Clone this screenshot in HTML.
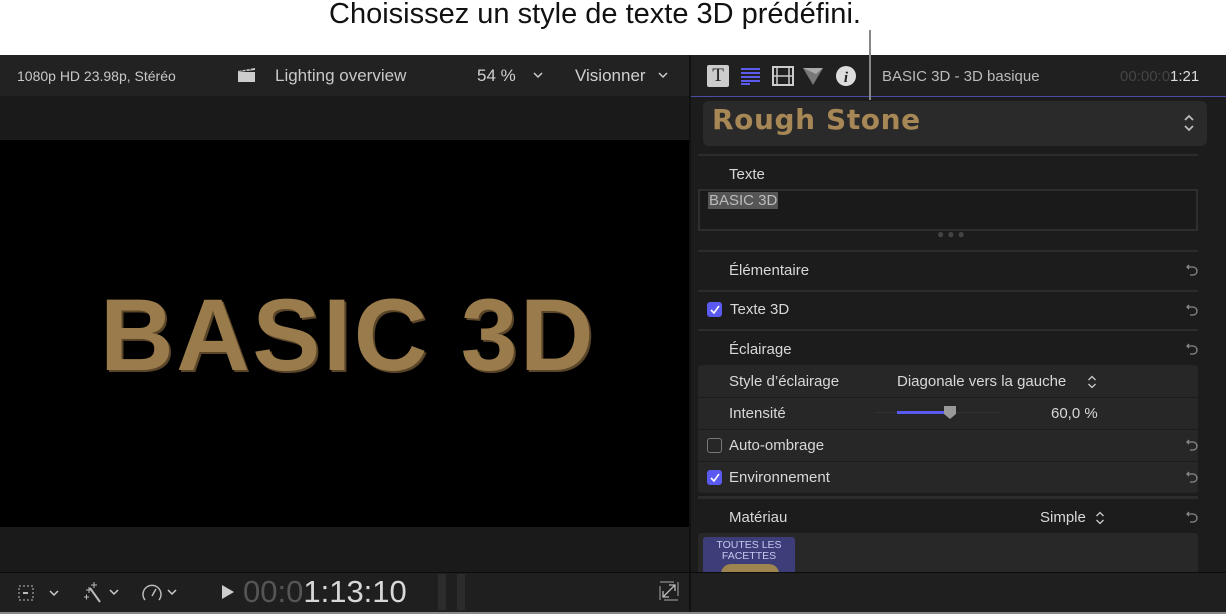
<!DOCTYPE html>
<html><head><meta charset="utf-8"><style>
*{margin:0;padding:0;box-sizing:border-box}
body{width:1226px;height:614px;background:#fff;position:relative;overflow:hidden;font-family:"Liberation Sans",sans-serif}
.a{position:absolute}
.t{position:absolute;color:#d8d8d8;font-size:15px;white-space:nowrap}
.rs{position:absolute;left:1185px;width:14px;height:14px}
.cb{position:absolute;width:15px;height:15px;border-radius:3px}
</style></head><body>
<div class="t" style="left:329px;top:-2px;color:#111;font-size:29px">Choisissez un style de texte 3D prédéfini.</div>
<div class="a" style="left:0;top:55px;width:1226px;height:559px;background:#1c1c1c"></div>
<div class="a" style="left:0;top:55px;width:690px;height:41px;background:#222"></div>
<div class="t" style="left:17px;top:68px;font-size:14px;color:#c8c8c8">1080p HD 23.98p, Stéréo</div>
<svg class="a" style="left:237px;top:66px" width="20" height="18"><rect x="1" y="6" width="17" height="10" fill="#ccc"/><path d="M1 5 L18 2 L18 4 L1 6Z" fill="#ccc"/><path d="M5 3v2M9 3v2M13 2v2" stroke="#222"/></svg>
<div class="t" style="left:275px;top:66px;font-size:17px;color:#c8c8c8">Lighting overview</div>
<div class="t" style="left:477px;top:66px;font-size:17px;color:#d0d0d0">54 %</div>
<svg class="a" style="left:533px;top:71px" width="10" height="8"><path d="M1 2l4 4 4-4" fill="none" stroke="#ccc" stroke-width="1.5"/></svg>
<div class="t" style="left:575px;top:66px;font-size:17px;color:#d0d0d0">Visionner</div>
<svg class="a" style="left:658px;top:71px" width="10" height="8"><path d="M1 2l4 4 4-4" fill="none" stroke="#ccc" stroke-width="1.5"/></svg>
<div class="a" style="left:0;top:96px;width:690px;height:44px;background:#1a1a1a"></div>
<div class="a" style="left:0;top:140px;width:690px;height:387px;background:#000"></div>
<div class="t" style="left:100px;top:277px;font-size:102px;font-weight:bold;color:#9a7c4c;letter-spacing:2.5px;text-shadow:2px 2px 0 #5a4528">BASIC 3D</div>
<div class="a" style="left:0;top:527px;width:690px;height:45px;background:#1a1a1a"></div>
<div class="a" style="left:0;top:572px;width:1226px;height:1px;background:#0c0c0c"></div>
<div class="a" style="left:0;top:573px;width:1226px;height:39px;background:#1f1f1f"></div>
<div class="a" style="left:0;top:612px;width:1226px;height:2px;background:#888"></div>
<div class="a" style="left:689px;top:55px;width:2px;height:557px;background:#111"></div>
<svg class="a" style="left:17px;top:582px" width="48" height="22"><rect x="2" y="4" width="14" height="14" fill="none" stroke="#bbb" stroke-dasharray="2 2"/><rect x="6" y="10" width="5" height="2" fill="#bbb"/><path d="M33 9l4 4 4-4" fill="none" stroke="#ccc" stroke-width="1.5"/></svg>
<svg class="a" style="left:82px;top:580px" width="42" height="24"><path d="M8 8l10 14" stroke="#bbb" stroke-width="2"/><path d="M4 10h6M7 7v6M12 2v6M9 5h6M2 17h5M4.5 14.5v5" stroke="#bbb"/><path d="M28 10l4 4 4-4" fill="none" stroke="#ccc" stroke-width="1.5"/></svg>
<svg class="a" style="left:140px;top:580px" width="42" height="24"><path d="M5 20a9 9 0 1 1 14 0" fill="none" stroke="#bbb" stroke-width="1.5"/><path d="M12 16l4-7" stroke="#bbb" stroke-width="1.5"/><path d="M28 10l4 4 4-4" fill="none" stroke="#ccc" stroke-width="1.5"/></svg>
<svg class="a" style="left:221px;top:584px" width="14" height="16"><path d="M1 1l12 7-12 7z" fill="#ccc"/></svg>
<div class="t" style="left:243px;top:574px;font-size:31px;color:#555">00:0<span style="color:#d8d8d8">1:13:10</span></div>
<div class="a" style="left:438px;top:574px;width:8px;height:36px;background:#2c2c2c"></div>
<div class="a" style="left:457px;top:574px;width:8px;height:36px;background:#2c2c2c"></div>
<svg class="a" style="left:659px;top:581px" width="20" height="20"><rect x="1" y="1" width="18" height="18" fill="none" stroke="#aaa" stroke-dasharray="14 4"/><path d="M4 16L16 4M10 4h6v6M4 10v6h6" fill="none" stroke="#bbb" stroke-width="1.3"/></svg>
<div class="a" style="left:691px;top:55px;width:535px;height:41px;background:#202020"></div>
<div class="a" style="left:691px;top:96px;width:535px;height:1px;background:#4b4ba8"></div>
<div class="a" style="left:707px;top:65px;width:22px;height:22px;background:#ccc;border-radius:2px;color:#222;font-family:'Liberation Serif',serif;font-size:19px;text-align:center;line-height:22px">T</div>
<svg class="a" style="left:741px;top:67px" width="20" height="18"><path d="M0 2h19M0 6h19M0 10h19M0 14h19M0 17h9" stroke="#5b5bf0" stroke-width="2"/></svg>
<svg class="a" style="left:772px;top:66px" width="22" height="20"><rect x="1" y="1" width="20" height="18" fill="none" stroke="#ccc" stroke-width="2"/><path d="M5 1v18M17 1v18M1 10h20" stroke="#ccc" stroke-width="1.5"/></svg>
<svg class="a" style="left:802px;top:66px" width="22" height="20"><path d="M1 2h20L11 19z" fill="#777"/><path d="M1 2h20L14 8z" fill="#aaa"/></svg>
<svg class="a" style="left:835px;top:65px" width="22" height="22"><circle cx="11" cy="11" r="10" fill="#ddd"/><text x="11" y="17" text-anchor="middle" font-family="Liberation Serif" font-style="italic" font-weight="bold" font-size="15" fill="#222">i</text></svg>
<div class="a" style="left:869px;top:30px;width:2px;height:70px;background:#888"></div>
<div class="t" style="left:882px;top:68px;color:#bbb">BASIC 3D - 3D basique</div>
<div class="t" style="left:1120px;top:68px;color:#444">00:00:0<span style="color:#ddd">1:21</span></div>
<div class="a" style="left:703px;top:101px;width:504px;height:45px;background:#2a2a2a;border-radius:6px"></div>
<div class="t" style="left:712px;top:103px;font-family:'DejaVu Sans',sans-serif;font-weight:bold;font-size:28px;color:#a68755;letter-spacing:0.6px">Rough Stone</div>
<svg class="a" style="left:1183px;top:113px" width="12" height="20"><path d="M2 7l4-4 4 4M2 13l4 4 4-4" fill="none" stroke="#bbb" stroke-width="1.8"/></svg>
<div class="a" style="left:698px;top:154px;width:500px;height:2px;background:#2c2c2c"></div>
<div class="t" style="left:729px;top:166px">Texte</div>
<div class="a" style="left:698px;top:189px;width:500px;height:42px;border:2px solid #2e2e2e;background:#1a1a1a"></div>
<div class="t" style="left:708px;top:192px;background:#555;color:#bbb;font-size:15px;padding:0 1px">BASIC 3D</div>
<div class="t" style="left:937px;top:227px;color:#444;font-size:12px;letter-spacing:3px">●●●</div>
<div class="a" style="left:698px;top:250px;width:500px;height:2px;background:#2c2c2c"></div>
<div class="t" style="left:729px;top:262px">Élémentaire</div>
<div class="a" style="left:698px;top:290px;width:500px;height:2px;background:#2c2c2c"></div>
<div class="cb" style="left:707px;top:302px;background:#5a5af0"></div><svg class="a" style="left:707px;top:302px" width="15" height="15"><path d="M4 8l3 3 5-7" fill="none" stroke="#fff" stroke-width="1.6"/></svg>
<div class="t" style="left:730px;top:301px">Texte 3D</div>
<div class="a" style="left:698px;top:329px;width:500px;height:2px;background:#2c2c2c"></div>
<div class="t" style="left:729px;top:341px">Éclairage</div>
<div class="a" style="left:698px;top:365px;width:500px;height:128px;background:#272727;border-radius:4px"></div>
<div class="a" style="left:698px;top:397px;width:500px;height:1px;background:#1c1c1c"></div>
<div class="a" style="left:698px;top:429px;width:500px;height:1px;background:#1c1c1c"></div>
<div class="a" style="left:698px;top:461px;width:500px;height:1px;background:#1c1c1c"></div>
<div class="t" style="left:729px;top:373px">Style d’éclairage</div>
<div class="t" style="left:897px;top:373px">Diagonale vers la gauche</div>
<svg class="a" style="left:1087px;top:374px" width="10" height="16"><path d="M1.5 6l3.5-3.5 3.5 3.5M1.5 10l3.5 3.5 3.5-3.5" fill="none" stroke="#ccc" stroke-width="1.3"/></svg>
<div class="t" style="left:729px;top:405px">Intensité</div>
<div class="a" style="left:875px;top:412px;width:125px;height:1px;background:#333"></div>
<div class="a" style="left:897px;top:411px;width:50px;height:3px;background:#5a5af0"></div>
<svg class="a" style="left:943px;top:405px" width="14" height="15"><path d="M1 1h12v8l-6 5-6-5z" fill="#999"/></svg>
<div class="t" style="left:1051px;top:405px">60,0 %</div>
<div class="cb" style="left:707px;top:438px;border:1.5px solid #777"></div>
<div class="t" style="left:729px;top:437px">Auto-ombrage</div>
<div class="cb" style="left:707px;top:470px;background:#5a5af0"></div><svg class="a" style="left:707px;top:470px" width="15" height="15"><path d="M4 8l3 3 5-7" fill="none" stroke="#fff" stroke-width="1.6"/></svg>
<div class="t" style="left:729px;top:469px">Environnement</div>
<div class="a" style="left:698px;top:496px;width:500px;height:3px;background:#2c2c2c"></div>
<div class="t" style="left:729px;top:509px">Matériau</div>
<div class="t" style="left:1040px;top:509px">Simple</div>
<svg class="a" style="left:1095px;top:510px" width="10" height="16"><path d="M1.5 6l3.5-3.5 3.5 3.5M1.5 10l3.5 3.5 3.5-3.5" fill="none" stroke="#ccc" stroke-width="1.3"/></svg>
<div class="a" style="left:698px;top:533px;width:500px;height:39px;background:#282828;border-radius:4px 4px 0 0"></div>
<div class="a" style="left:703px;top:537px;width:92px;height:35px;background:#3d3d7a;border-radius:3px 3px 0 0;overflow:hidden"><div style="color:#c8c8f0;font-size:10.5px;text-align:center;line-height:11px;margin-top:3px">TOUTES LES<br>FACETTES</div><div style="position:absolute;left:18px;top:27px;width:58px;height:20px;border-radius:14px;background:#9e844e"></div></div>
<svg class="rs" style="top:262px" viewBox="0 0 14 14"><path d="M4 3l-2 2 2 2M2 5h6a4 4 0 0 1 0 8H5" fill="none" stroke="#888" stroke-width="1.3"/></svg>
<svg class="rs" style="top:302px" viewBox="0 0 14 14"><path d="M4 3l-2 2 2 2M2 5h6a4 4 0 0 1 0 8H5" fill="none" stroke="#888" stroke-width="1.3"/></svg>
<svg class="rs" style="top:341px" viewBox="0 0 14 14"><path d="M4 3l-2 2 2 2M2 5h6a4 4 0 0 1 0 8H5" fill="none" stroke="#888" stroke-width="1.3"/></svg>
<svg class="rs" style="top:437px" viewBox="0 0 14 14"><path d="M4 3l-2 2 2 2M2 5h6a4 4 0 0 1 0 8H5" fill="none" stroke="#888" stroke-width="1.3"/></svg>
<svg class="rs" style="top:469px" viewBox="0 0 14 14"><path d="M4 3l-2 2 2 2M2 5h6a4 4 0 0 1 0 8H5" fill="none" stroke="#888" stroke-width="1.3"/></svg>
<svg class="rs" style="top:509px" viewBox="0 0 14 14"><path d="M4 3l-2 2 2 2M2 5h6a4 4 0 0 1 0 8H5" fill="none" stroke="#888" stroke-width="1.3"/></svg>
</body></html>
